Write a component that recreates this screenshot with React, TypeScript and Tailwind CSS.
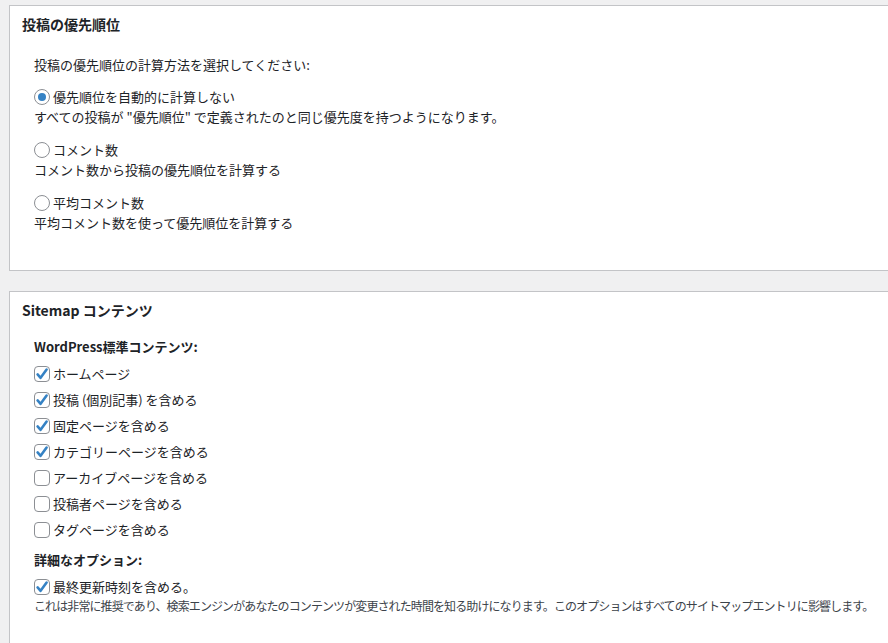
const font = { fontFamily: '"Noto Sans CJK JP", "Noto Sans", sans-serif' }

function Radio({ checked }: { checked?: boolean }) {
  return (
    <span className="flex h-4 w-4 shrink-0 items-center justify-center rounded-full border border-[#8c8f94] bg-white">
      {checked && <span className="h-2 w-2 rounded-full bg-[#3582c4]" />}
    </span>
  )
}

function Check({ checked }: { checked?: boolean }) {
  return (
    <span className="relative flex h-4 w-4 shrink-0 items-center justify-center rounded-[4px] border border-[#8c8f94] bg-white">
      {checked && (
        <svg viewBox="0 0 16 16" className="absolute left-[-1px] top-[-1px] h-4 w-4 overflow-visible">
          <path d="M3.6 8.4 L6.6 11.8 L12.6 3.6" fill="none" stroke="#3582c4" strokeWidth="2.6" strokeLinecap="round" strokeLinejoin="round" />
        </svg>
      )}
    </span>
  )
}

function RadioOption({ label, desc, checked, className }: { label: string; desc: string; checked?: boolean; className?: string }) {
  return (
    <div className={className}>
      <div className="flex h-5 items-center gap-[3px]">
        <Radio checked={checked} />
        <span>{label}</span>
      </div>
      <div className="h-5 leading-5">{desc}</div>
    </div>
  )
}

function CheckRow({ label, checked }: { label: string; checked?: boolean }) {
  return (
    <div className="flex h-[26px] items-center gap-[3px]">
      <Check checked={checked} />
      <span>{label}</span>
    </div>
  )
}

export default function App() {
  const contents = [
    { label: "ホームページ", checked: true },
    { label: "投稿 (個別記事) を含める", checked: true },
    { label: "固定ページを含める", checked: true },
    { label: "カテゴリーページを含める", checked: true },
    { label: "アーカイブページを含める", checked: false },
    { label: "投稿者ページを含める", checked: false },
    { label: "タグページを含める", checked: false },
  ]

  return (
    <div className="h-[643px] w-full overflow-hidden bg-[#f0f0f1] pt-[5px] text-[13px] leading-5 text-[#1d2327]" style={font}>
      <div className="ml-[9px] w-[900px] border border-[#c3c4c7] bg-white">
        <h2 className="px-3 py-2 text-[14px] font-bold leading-5">投稿の優先順位</h2>
        <div className="px-6 pb-[37px]">
          <p className="mt-[13px] h-5">投稿の優先順位の計算方法を選択してください:</p>
          <RadioOption
            className="mt-3"
            checked
            label="優先順位を自動的に計算しない"
            desc={'すべての投稿が "優先順位" で定義されたのと同じ優先度を持つようになります。'}
          />
          <RadioOption className="mt-[13px]" label="コメント数" desc="コメント数から投稿の優先順位を計算する" />
          <RadioOption className="mt-[13px]" label="平均コメント数" desc="平均コメント数を使って優先順位を計算する" />
        </div>
      </div>

      <div className="ml-[9px] mt-5 w-[900px] border border-[#c3c4c7] bg-white pb-10">
        <h2 className="px-3 py-2 text-[14px] font-bold leading-5">Sitemap コンテンツ</h2>
        <div className="px-6">
          <p className="mt-[9px] h-5 font-semibold">WordPress標準コンテンツ:</p>
          <div className="mt-1">
            {contents.map((c) => (
              <CheckRow key={c.label} label={c.label} checked={c.checked} />
            ))}
          </div>
          <p className="mt-[7px] h-5 font-semibold">詳細なオプション:</p>
          <div className="mt-[6px] flex h-[22px] items-center gap-[3px]">
            <Check checked />
            <span>最終更新時刻を含める。</span>
          </div>
          <p className="h-4 whitespace-nowrap text-[12px] leading-4 tracking-[-0.9px] text-[#3c434a]">
            これは非常に推奨であり、検索エンジンがあなたのコンテンツが変更された時間を知る助けになります。このオプションはすべてのサイトマップエントリに影響します。
          </p>
        </div>
      </div>
    </div>
  )
}
